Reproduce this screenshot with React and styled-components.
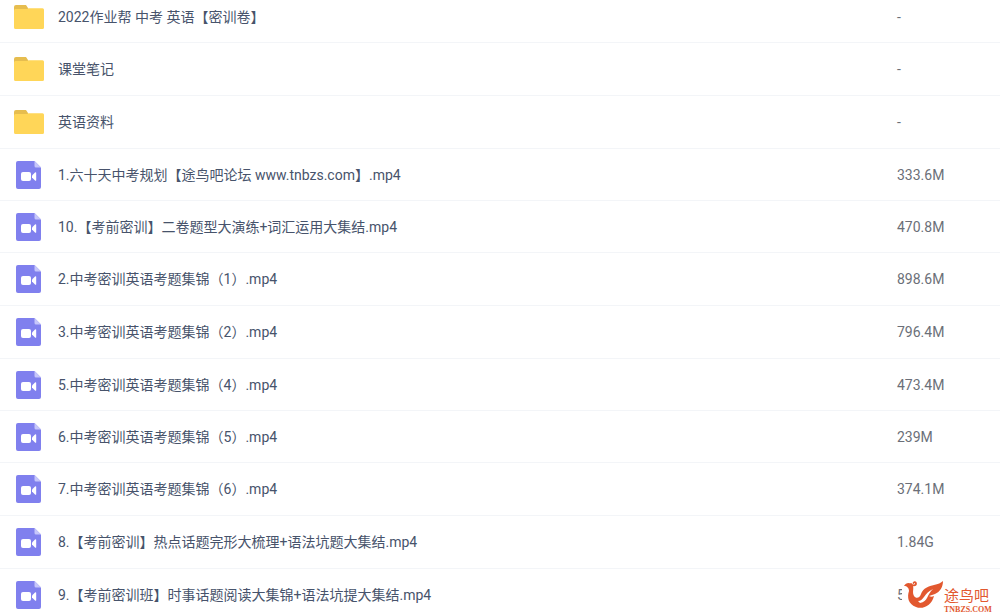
import React from 'react'
import styled, { createGlobalStyle } from 'styled-components'

const files = [
  { type: 'folder', name: '2022作业帮 中考 英语【密训卷】', size: '-' },
  { type: 'folder', name: '课堂笔记', size: '-' },
  { type: 'folder', name: '英语资料', size: '-' },
  { type: 'video', name: '1.六十天中考规划【途鸟吧论坛 www.tnbzs.com】.mp4', size: '333.6M' },
  { type: 'video', name: '10.【考前密训】二卷题型大演练+词汇运用大集结.mp4', size: '470.8M' },
  { type: 'video', name: '2.中考密训英语考题集锦（1）.mp4', size: '898.6M' },
  { type: 'video', name: '3.中考密训英语考题集锦（2）.mp4', size: '796.4M' },
  { type: 'video', name: '5.中考密训英语考题集锦（4）.mp4', size: '473.4M' },
  { type: 'video', name: '6.中考密训英语考题集锦（5）.mp4', size: '239M' },
  { type: 'video', name: '7.中考密训英语考题集锦（6）.mp4', size: '374.1M' },
  { type: 'video', name: '8.【考前密训】热点话题完形大梳理+语法坑题大集结.mp4', size: '1.84G' },
  { type: 'video', name: '9.【考前密训班】时事话题阅读大集锦+语法坑提大集结.mp4', size: '5' },
]

const FolderIcon = () => (
  <Icon viewBox="0 0 30 28" aria-hidden="true">
    <path d="M0 4a2 2 0 0 1 2-2h10l2 3v6H0z" fill="#e6bd4f" />
    <path d="M0 7.500a1.500 1.500 0 0 1 1.500-1.500H13l1.500-.8H28.500a1.500 1.500 0 0 1 1.500 1.500V24.500a1.500 1.500 0 0 1-1.500 1.500H1.500A1.500 1.500 0 0 1 0 24.500z" fill="#ffd658" />
  </Icon>
)

const VideoIcon = () => (
  <Icon viewBox="0 0 30 28" aria-hidden="true">
    <path d="M4 0H20.500L27 6.500V26a2 2 0 0 1-2 2H4a2 2 0 0 1-2-2V2a2 2 0 0 1 2-2z" fill="#8080ee" />
    <path d="M20.500 0L27 6.500H22a1.500 1.500 0 0 1-1.500-1.500z" fill="#c6c6fa" />
    <rect x="7" y="11" width="10" height="9" rx="2" fill="#fff" />
    <path d="M18 14.500l3-3q1.200-.8 1.200.6v6.800q0 1.400-1.200.6L18 16.500z" fill="#fff" />
  </Icon>
)

export default function App() {
  return (
    <>
      <GlobalStyle />
      <main>
        <FileTable aria-label="文件列表">
          <tbody>
            {files.map((file) => (
              <Row key={file.name}>
                <NameCell>
                  <FileName>
                    {file.type === 'folder' ? <FolderIcon /> : <VideoIcon />}
                    <span>{file.name}</span>
                  </FileName>
                </NameCell>
                <SizeCell>{file.size}</SizeCell>
              </Row>
            ))}
          </tbody>
        </FileTable>
      </main>
      <Watermark>
        <Bird viewBox="0 0 40 30" aria-hidden="true">
          <path d="M0 6C2 2 7 2 9 6C10 9 8 12 10 16C12 19 16 18 17 14C19 8 25 6 30 5C34 4 37 3 39 1C39 7 36 12 31 14C29 15 27 15 25 16C27 17 28 17 30 16C28 25 19 30 12 27C4 24 3 17 5 11C5 8 3 6 0 6z" />
          <path d="M7 4C8 6 12 6 12 3.500C12 2 10 1.500 9.500 3" fill="none" stroke="#e2582f" strokeWidth="1.800" strokeLinecap="round" />
          <path d="M14 21C20 21 20 13 29 9C23 14 24 22 16 23z" fill="#fff" />
        </Bird>
        <Brand>
          <BrandName>途鸟吧</BrandName>
          <BrandSite>TNBZS.COM</BrandSite>
        </Brand>
      </Watermark>
    </>
  )
}

const GlobalStyle = createGlobalStyle`
  body {
    margin: 0;
    overflow: hidden;
    background: #fff;
    font-family: Roboto, "Noto Sans CJK SC", sans-serif;
    font-size: 14px;
    line-height: 20px;
  }
`;

const FileTable = styled.table`
  width: 100%;
  margin-top: -9px;
  border-spacing: 0;
`;

const Row = styled.tr`
  height: 53px;

  &:nth-child(4n),
  &:nth-child(4n + 1) {
    height: 52px;
  }
`;

const Cell = styled.td`
  padding: 0;
  border-bottom: 1px solid #f3f5f8;
  vertical-align: middle;
`;

const NameCell = styled(Cell)`
  padding-left: 14px;
  color: #47536b;
`;

const SizeCell = styled(Cell)`
  width: 103px;
  color: #6b6f78;
`;

const FileName = styled.div`
  display: flex;
  align-items: center;
  gap: 14px;
`;

const Icon = styled.svg`
  flex: none;
  width: 30px;
  height: 28px;
`;

const Watermark = styled.div`
  position: fixed;
  right: 0;
  bottom: 0;
  display: flex;
  align-items: flex-start;
  width: 98px;
  height: 36px;
  box-sizing: border-box;
  padding-left: 2px;
  background: #fff;
  color: #e2582f;
`;

const Bird = styled.svg`
  flex: none;
  width: 40px;
  height: 30px;
  fill: #e2582f;
`;

const Brand = styled.div`
  display: flex;
  flex-direction: column;
  gap: 3px;
  padding-top: 7px;
`;

const BrandName = styled.span`
  font-family: "Noto Sans CJK SC", sans-serif;
  font-size: 15px;
  line-height: 16px;
`;

const BrandSite = styled.span`
  font-family: "Liberation Serif", serif;
  font-size: 8px;
  font-weight: bold;
  line-height: 8px;
`;
